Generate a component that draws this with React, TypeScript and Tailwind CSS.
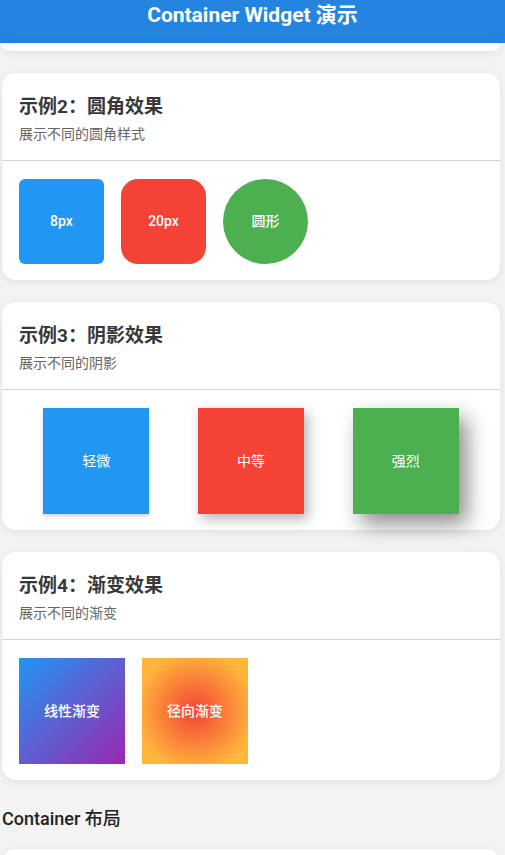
import React from 'react'

const font = { fontFamily: 'Roboto, "Noto Sans CJK SC", sans-serif' }

function Card({ title, subtitle, children }: { title: string; subtitle: string; children: React.ReactNode }) {
    return (
        <div className="bg-white rounded-[14px] shadow-[0_2px_8px_rgba(0,0,0,0.08)]">
            <div className="px-[17px] pt-[20px] pb-[16px] border-b border-[#d4d4d8]">
                <h2 className="text-[19px] leading-[28px] font-bold text-[#383838]">{title}</h2>
                <p className="mt-[3px] text-[14px] leading-[20px] text-[#666]">{subtitle}</p>
            </div>
            <div className="px-[17px] pt-[18px] pb-[16px]">{children}</div>
        </div>
    )
}

export default function App() {
    return (
        <div className="w-[505px] h-[855px] overflow-hidden bg-[#f3f3f3]" style={font}>
            <div className="h-[43px] bg-[#2385e0] flex justify-center">
                <h1 className="pt-[2px] text-[21px] leading-[26px] font-bold text-white">Container Widget 演示</h1>
            </div>

            <div className="pl-[2px] pr-[5px] flex flex-col gap-[22px]">
                {/* 上一个卡片的底部 */}
                <div className="h-[8px] bg-white rounded-b-[14px] shadow-[0_2px_8px_rgba(0,0,0,0.08)]" />

                <Card title="示例2：圆角效果" subtitle="展示不同的圆角样式">
                    <div className="flex gap-[17px]">
                        <div className="w-[85px] h-[85px] rounded-[6px] bg-[#2196f3] flex items-center justify-center text-white text-[14px] font-medium">8px</div>
                        <div className="w-[85px] h-[85px] rounded-[17px] bg-[#f44336] flex items-center justify-center text-white text-[14px] font-medium">20px</div>
                        <div className="w-[85px] h-[85px] rounded-full bg-[#4caf50] flex items-center justify-center text-white text-[14px] font-medium">圆形</div>
                    </div>
                </Card>

                <Card title="示例3：阴影效果" subtitle="展示不同的阴影">
                    <div className="flex justify-around">
                        <div className="w-[106px] h-[106px] bg-[#2196f3] shadow-[0_2px_4px_rgba(0,0,0,0.18)] flex items-center justify-center text-white text-[14px]">轻微</div>
                        <div className="w-[106px] h-[106px] bg-[#f44336] shadow-[4px_5px_12px_rgba(0,0,0,0.3)] flex items-center justify-center text-white text-[14px]">中等</div>
                        <div className="w-[106px] h-[106px] bg-[#4caf50] shadow-[8px_10px_20px_rgba(0,0,0,0.45)] flex items-center justify-center text-white text-[14px]">强烈</div>
                    </div>
                </Card>

                <Card title="示例4：渐变效果" subtitle="展示不同的渐变">
                    <div className="flex gap-[17px]">
                        <div className="w-[106px] h-[106px] bg-[linear-gradient(135deg,#2196f3,#9c27b0)] flex items-center justify-center text-white text-[14px] font-medium">线性渐变</div>
                        <div className="w-[106px] h-[106px] bg-[radial-gradient(circle,#f44336_0%,#ffb63c_80%)] flex items-center justify-center text-white text-[14px] font-medium">径向渐变</div>
                    </div>
                </Card>

                <div className="mt-[2px]">
                    <h3 className="text-[18px] leading-[30px] font-medium text-[#222]">Container 布局</h3>
                    <div className="mt-[15px] h-[40px] bg-white rounded-[14px] shadow-[0_2px_8px_rgba(0,0,0,0.08)]" />
                </div>
            </div>
        </div>
    )
}
